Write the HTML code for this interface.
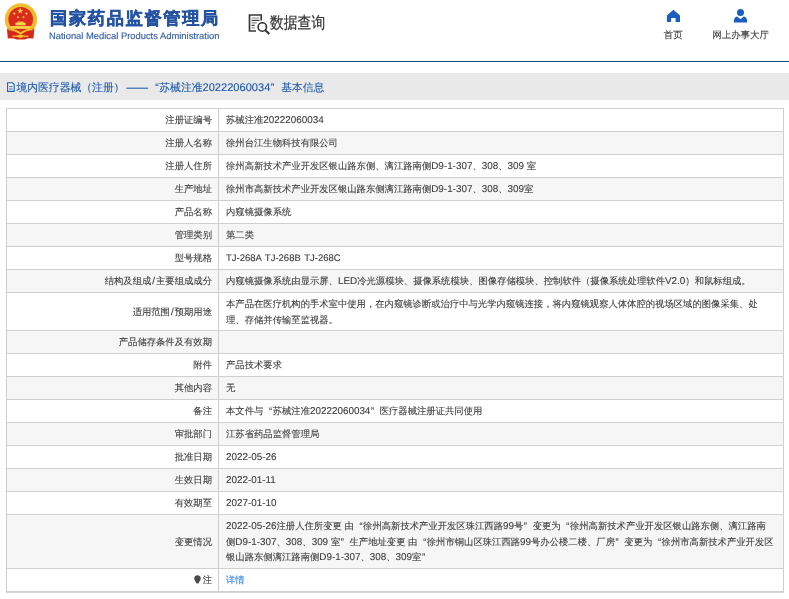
<!DOCTYPE html>
<html><head><meta charset="utf-8">
<style>
*{margin:0;padding:0;box-sizing:border-box}
html,body{width:789px;height:599px;overflow:hidden;background:#fff}
body{will-change:transform}
body{font-family:"Liberation Sans",sans-serif;position:relative;color:#333;text-rendering:geometricPrecision}
i{font-style:normal}
.abs{position:absolute;white-space:nowrap}
#emblem{left:0;top:0;width:42px;height:44px}
#cn{left:50px;top:6.8px;font-size:17.2px;letter-spacing:1.7px;font-weight:bold;color:#2352a3;-webkit-text-stroke:0.45px #2352a3}
#en{left:49px;top:29.5px;font-size:9.4px;color:#3560a3;-webkit-text-stroke:0.15px #3560a3}
#sjcx{left:246px;top:12px}
#sjcxt{left:270px;top:13.5px;font-size:13.8px;color:#333;transform-origin:0 0;transform:scaleY(1.17);-webkit-text-stroke:0.2px #333}
.nav{font-size:9.4px;color:#3a3a3a;-webkit-text-stroke:0.12px #3a3a3a}
#line{left:0;top:61px;width:789px;height:1px;background:#1f4e80}
#band{left:0;top:73px;width:789px;height:27px;background:#e9e9e9}
.bt{top:81.5px;font-size:10.8px;color:#1f5bab;-webkit-text-stroke:0.12px #1f5bab}
.bt i{font-size:11.1px}
table{position:absolute;left:6px;top:108px;width:778px;border-collapse:collapse;font-size:9.33px;color:#3a3a3a;table-layout:fixed}
td{-webkit-text-stroke:0.1px #444;border:1px solid #cfcfcf;padding:2px 0 0 7px;line-height:15.7px;vertical-align:middle;white-space:nowrap}
td i{font-size:9.9px}
td.l{width:212px;text-align:right;padding:2px 6px 0 0}
b{font-weight:normal}
.ql,.qr{display:inline-block;width:1em;text-indent:0}
.ql{text-align:right;padding-right:0.5px}
.qr{text-align:left;padding-left:0.5px}
tr:nth-child(even) td{background:#f6f6f6}
tr{height:23px}
.lnk{color:#3f8ce4;-webkit-text-stroke:0.15px #3f8ce4}
.pin{display:inline-block;width:7px;height:9px;margin-right:1.5px;vertical-align:-1px}
#bb{left:6px;top:592px;width:778px;height:1px;background:#d6d6d6}
</style></head><body>
<svg id="emblem" class="abs" viewBox="0 0 42 44">
  <circle cx="20.9" cy="19.5" r="16.2" fill="#f0be2e"/>
  <circle cx="20.7" cy="19.3" r="12.3" fill="#dc2a1e"/>
  <g fill="#f7d54a">
    <polygon points="20.2,7.6 21,10 23.3,10 21.4,11.4 22.1,13.6 20.2,12.2 18.3,13.6 19,11.4 17.1,10 19.4,10"/>
    <circle cx="14.3" cy="13.6" r="1.1"/><circle cx="26.4" cy="13.6" r="1.1"/>
    <circle cx="18" cy="17.3" r="1"/><circle cx="23.5" cy="17.3" r="1"/>
    <rect x="17.5" y="21.6" width="6" height="1.2"/>
    <rect x="15.5" y="22.6" width="10.1" height="2.7"/>
  </g>
  <path d="M7 29.6 Q6.5 29 8.5 28.5 H33 Q35 29 34.3 29.6 L33.4 38.6 Q28 37.6 24.5 39.4 H16.5 Q13 37.6 7.8 38.6Z" fill="#d8261b"/>
  <rect x="10.5" y="26" width="20.2" height="2.9" fill="#f5cf45"/>
  <path d="M8.5 29.3 Q15 29.5 20.6 33.6 Q26 29.5 32.8 29.3" stroke="#f0be2e" stroke-width="1.9" fill="none"/>
  <path d="M12.5 36.2 Q16.5 36.7 18.5 35.6 M22.5 35.6 Q24.5 36.7 28.5 36.2" stroke="#f0be2e" stroke-width="1.3" fill="none"/>
  <ellipse cx="20.4" cy="36.3" rx="2.8" ry="1.8" fill="#f0be2e"/>
</svg>
<div id="cn" class="abs">国家药品监督管理局</div>
<div id="en" class="abs">National Medical Products Administration</div>
<svg id="sjcx" class="abs" width="26" height="24" viewBox="246 12 26 24">
  <path d="M256 31 H249.5 V15 H261.2 V20.5" stroke="#3a3a3a" stroke-width="1.7" fill="none"/>
  <path d="M251.5 18H259.3 M251.5 22.8H256.7 M251.5 27.8H254.7" stroke="#8a8a8a" stroke-width="1.2"/>
  <path d="M251.5 20.4H259.5 M251.5 25.4H254.7" stroke="#444" stroke-width="1.1"/>
  <circle cx="262.3" cy="27" r="4.2" stroke="#333" stroke-width="1.6" fill="#fff"/>
  <path d="M265.4 30.3 L269.4 34" stroke="#333" stroke-width="2.1"/>
</svg>
<div id="sjcxt" class="abs">数据查询</div>
<svg class="abs" style="left:665px;top:8px" width="17" height="16" viewBox="665 8 17 16">
  <path d="M673.4 9.8 L680 15.6 V22 H675.6 V17.9 H671.1 V22 H666.9 V15.6Z" fill="#1a5fc0"/>
</svg>
<div class="abs nav" style="left:663.8px;top:28.5px">首页</div>
<svg class="abs" style="left:732px;top:8px" width="17" height="16" viewBox="732 8 17 16">
  <circle cx="740.5" cy="12.6" r="3.5" fill="#1a5fc0"/>
  <path d="M733.8 22.6 Q733.8 16.4 737.2 16.4 L740.5 19.2 L743.8 16.4 Q747.2 16.4 747.2 22.6Z" fill="#1a5fc0"/>
</svg>
<div class="abs nav" style="left:712.5px;top:28.5px">网上办事大厅</div>
<div id="line" class="abs"></div>
<div id="band" class="abs"></div>
<svg class="abs" style="left:6px;top:81px" width="10" height="12" viewBox="6 81 10 12">
  <path d="M7.6 82.7 H12.3 L14.2 84.6 V91.4 H7.6Z" stroke="#1f5bab" stroke-width="1.1" fill="#eef2fa"/>
  <path d="M9.2 86.6 H12.6 M9.2 89 H12.6" stroke="#1f5bab" stroke-width="0.9"/>
</svg>
<div class="abs bt" style="left:16.5px">境内医疗器械（注册）</div>
<div class="abs bt" style="left:126.5px">——</div>
<div class="abs bt" style="left:148.5px"><b class=ql>“</b>苏械注准<i>20222060034</i><b class=qr>”</b>基本信息</div>
<table>
<tr><td class="l">注册证编号</td><td class="v">苏械注准<i>20222060034</i></td></tr>
<tr><td class="l">注册人名称</td><td class="v">徐州台江生物科技有限公司</td></tr>
<tr><td class="l">注册人住所</td><td class="v">徐州高新技术产业开发区银山路东侧、漓江路南侧<i>D9-1-307</i>、<i>308</i>、<i>309 </i>室</td></tr>
<tr><td class="l">生产地址</td><td class="v">徐州市高新技术产业开发区银山路东侧漓江路南侧<i>D9-1-307</i>、<i>308</i>、<i>309</i>室</td></tr>
<tr><td class="l">产品名称</td><td class="v">内窥镜摄像系统</td></tr>
<tr><td class="l">管理类别</td><td class="v">第二类</td></tr>
<tr><td class="l">型号规格</td><td class="v"><i style="font-size:9.5px;word-spacing:1px">TJ-268A TJ-268B TJ-268C</i></td></tr>
<tr><td class="l">结构及组成<i style="padding:0 1px">/</i>主要组成成分</td><td class="v">内窥镜摄像系统由显示屏、<i>LED</i>冷光源模块、摄像系统模块、图像存储模块、控制软件（摄像系统处理软件<i>V2.0</i>）和鼠标组成。</td></tr>
<tr style="height:38px"><td class="l">适用范围<i style="padding:0 1px">/</i>预期用途</td><td class="v">本产品在医疗机构的手术室中使用，在内窥镜诊断或治疗中与光学内窥镜连接，将内窥镜观察人体体腔的视场区域的图像采集、处<br>理、存储并传输至监视器。</td></tr>
<tr><td class="l">产品储存条件及有效期</td><td class="v"></td></tr>
<tr><td class="l">附件</td><td class="v">产品技术要求</td></tr>
<tr><td class="l">其他内容</td><td class="v">无</td></tr>
<tr><td class="l">备注</td><td class="v">本文件与<b class=ql>“</b>苏械注准<i>20222060034</i><b class=qr>”</b>医疗器械注册证共同使用</td></tr>
<tr><td class="l">审批部门</td><td class="v">江苏省药品监督管理局</td></tr>
<tr><td class="l">批准日期</td><td class="v"><i>2022-05-26</i></td></tr>
<tr><td class="l">生效日期</td><td class="v"><i>2022-01-11</i></td></tr>
<tr><td class="l">有效期至</td><td class="v"><i>2027-01-10</i></td></tr>
<tr style="height:54px"><td class="l">变更情况</td><td class="v"><i>2022-05-26</i>注册人住所变更 由<b class=ql>“</b>徐州高新技术产业开发区珠江西路<i>99</i>号<b class=qr>”</b>变更为<b class=ql>“</b>徐州高新技术产业开发区银山路东侧、漓江路南<br>侧<i>D9-1-307</i>、<i>308</i>、<i>309 </i>室<b class=qr>”</b>生产地址变更 由<b class=ql>“</b>徐州市铜山区珠江西路<i>99</i>号办公楼二楼、厂房<b class=qr>”</b>变更为<b class=ql>“</b>徐州市高新技术产业开发区<br>银山路东侧漓江路南侧<i>D9-1-307</i>、<i>308</i>、<i>309</i>室<b class=qr>”</b></td></tr>
<tr><td class="l"><svg class=pin viewBox="0 0 7 9"><path d="M3.5 0.2 C1.5 0.2 0.2 1.6 0.2 3.4 C0.2 5.2 2 6.3 2.5 8.6 H4.5 C5 6.3 6.8 5.2 6.8 3.4 C6.8 1.6 5.5 0.2 3.5 0.2Z" fill="#4a4a4a"/></svg>注</td><td class="v"><span class="lnk">详情</span></td></tr></table><div id="bb" class="abs"></div>
</body></html>
